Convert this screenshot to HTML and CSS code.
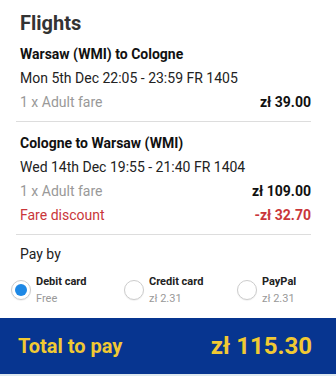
FILE: index.html
```html
<!DOCTYPE html>
<html>
<head>
<meta charset="utf-8">
<link rel="stylesheet" href="styles.css">
</head>
<body>
<div class="panel">
  <div class="content">
    <h1 class="title">Flights</h1>
    <section class="leg">
      <div class="route">Warsaw (WMI) to Cologne</div>
      <div class="when">Mon 5th Dec 22:05 - 23:59 FR 1405</div>
      <div class="row muted"><span>1 x Adult fare</span><span class="amount">zł 39.00</span></div>
    </section>
    <section class="leg">
      <div class="route">Cologne to Warsaw (WMI)</div>
      <div class="when">Wed 14th Dec 19:55 - 21:40 FR 1404</div>
      <div class="row muted"><span>1 x Adult fare</span><span class="amount">zł 109.00</span></div>
      <div class="row discount"><span>Fare discount</span><span class="amount">-zł 32.70</span></div>
    </section>
    <div class="payby">Pay by</div>
    <div class="methods">
      <label class="method">
        <span class="radio checked"></span>
        <span class="mtext"><span class="mname">Debit card</span><span class="mfee">Free</span></span>
      </label>
      <label class="method">
        <span class="radio"></span>
        <span class="mtext"><span class="mname">Credit card</span><span class="mfee">zł 2.31</span></span>
      </label>
      <label class="method">
        <span class="radio"></span>
        <span class="mtext"><span class="mname">PayPal</span><span class="mfee">zł 2.31</span></span>
      </label>
    </div>
  </div>
  <div class="total">
    <span class="total-label">Total to pay</span>
    <span class="total-amount">zł 115.30</span>
  </div>
</div>
</body>
</html>
```
FILE: styles.css
```css
* { box-sizing: border-box; }
html, body { margin: 0; padding: 0; background: #fff; }
body { font-family: Roboto, "Noto Sans", sans-serif; color: #222; width: 336px; height: 376px; overflow: hidden; }
.panel { display: flex; flex-direction: column; height: 376px; border-bottom: 2px solid #dfe9ee; }
.content { padding: 10px 25px 0 20px; flex: 1; }
.title { margin: 0; font-size: 20px; font-weight: 700; color: #333; line-height: 26px; }
.leg { border-bottom: 1px solid #ddd; padding: 6px 0 7px 4px; margin-left: -4px; }
.leg + .leg { padding-top: 9px; }
.route { font-size: 14px; font-weight: 700; line-height: 24px; color: #111; }
.when { font-size: 14px; line-height: 24px; color: #222; }
.row { display: flex; justify-content: space-between; font-size: 14px; line-height: 24px; }
.muted { color: #999; }
.amount { font-weight: 700; color: #111; }
.discount { color: #c9363a; }
.discount .amount { color: #c9363a; }
.payby { font-size: 14px; line-height: 20px; color: #222; margin-top: 9px; }
.methods { display: flex; margin-left: -9px; margin-top: 10px; }
.method { display: flex; align-items: flex-start; width: 113px; flex: none; gap: 5px; }
.radio { width: 20px; height: 20px; border-radius: 50%; border: 1px solid #ccc; background: #fff; flex: none; position: relative; margin-top: 6px; box-shadow: 0 1px 1px rgba(0,0,0,0.06); }
.radio.checked::after { content: ""; position: absolute; left: 3px; top: 3px; width: 12px; height: 12px; border-radius: 50%; background: #1e88e5; }
.mtext { display: flex; flex-direction: column; }
.mname { font-size: 11px; font-weight: 700; color: #222; line-height: 16px; }
.mfee { font-size: 11px; color: #999; line-height: 18px; }
.total { height: 56px; background: #073590; display: flex; justify-content: space-between; align-items: center; padding: 0 24px 0 18px; color: #f1c933; font-weight: 700; }
.total-label { font-size: 20px; }
.total-amount { font-size: 24px; }
```
